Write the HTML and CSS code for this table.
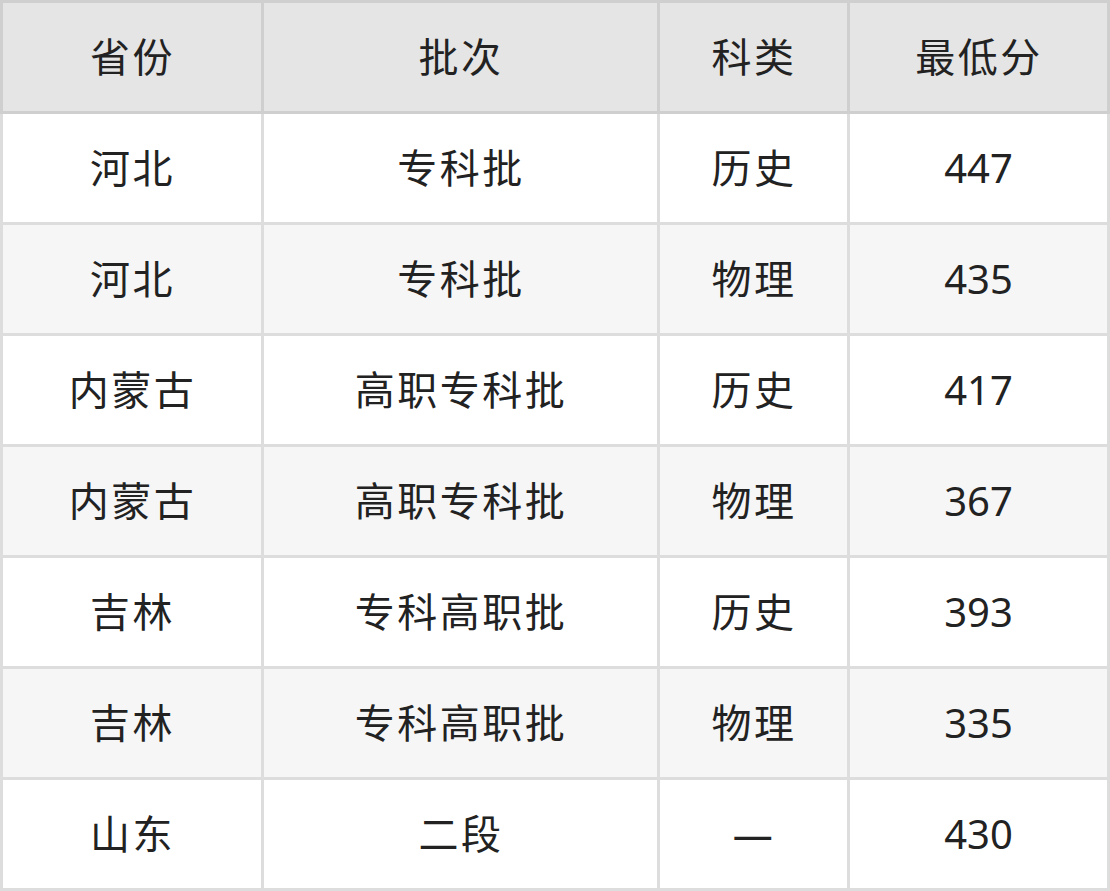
FILE: index.html
```html
<!DOCTYPE html>
<html lang="zh-CN">
<head>
<meta charset="utf-8">
<link rel="stylesheet" href="styles.css">
</head>
<body>
<table class="score-table">
  <colgroup>
    <col class="c1"><col class="c2"><col class="c3"><col class="c4">
  </colgroup>
  <thead>
    <tr><th>省份</th><th>批次</th><th>科类</th><th>最低分</th></tr>
  </thead>
  <tbody>
    <tr><td>河北</td><td>专科批</td><td>历史</td><td class="num">447</td></tr>
    <tr><td>河北</td><td>专科批</td><td>物理</td><td class="num">435</td></tr>
    <tr><td>内蒙古</td><td>高职专科批</td><td>历史</td><td class="num">417</td></tr>
    <tr><td>内蒙古</td><td>高职专科批</td><td>物理</td><td class="num">367</td></tr>
    <tr><td>吉林</td><td>专科高职批</td><td>历史</td><td class="num">393</td></tr>
    <tr><td>吉林</td><td>专科高职批</td><td>物理</td><td class="num">335</td></tr>
    <tr><td>山东</td><td>二段</td><td>—</td><td class="num">430</td></tr>
  </tbody>
</table>
</body>
</html>
```
FILE: styles.css
```css
html, body {
  margin: 0;
  padding: 0;
  background: #ffffff;
}
.score-table {
  width: 1110px;
  border-collapse: collapse;
  table-layout: fixed;
  font-family: "Noto Sans", "Noto Sans CJK SC", sans-serif;
  font-size: 40px;
  color: #222222;
}
.c1 { width: 261px; }
.c2 { width: 396px; }
.c3 { width: 190px; }
.c4 { width: 260px; }
.score-table tr {
  height: 111px;
}
.score-table th,
.score-table td {
  padding: 0 0 0 1px;
  letter-spacing: 2.5px;
  text-align: center;
  vertical-align: middle;
  font-weight: normal;
  line-height: 1;
}
.score-table td.num {
  padding: 0;
  letter-spacing: 0;
}
.score-table th {
  background: #e5e5e5;
  border: 3px solid #cfcfcf;
}
.score-table td {
  border: 3px solid #dddddd;
}
.score-table tbody tr:nth-child(even) td {
  background: #f6f6f6;
}
```
